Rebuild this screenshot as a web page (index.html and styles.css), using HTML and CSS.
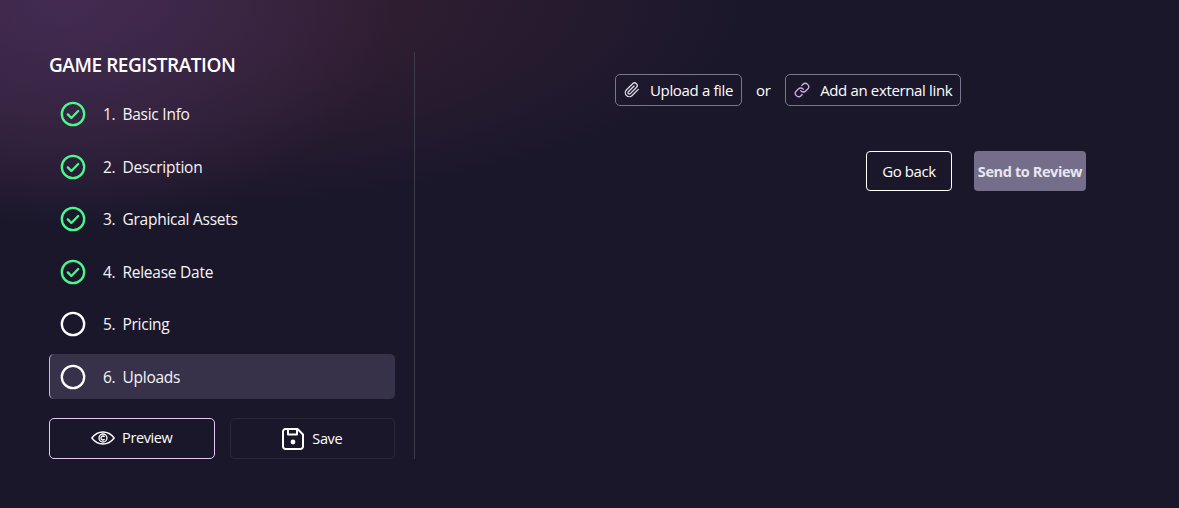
FILE: index.html
```html
<!DOCTYPE html>
<html lang="en">
<head>
<meta charset="utf-8">
<title>Game Registration</title>
<link rel="stylesheet" href="styles.css">
</head>
<body>
<main class="layout">
  <aside class="side">
    <h1 class="title">GAME REGISTRATION</h1>
    <ol class="steps">
      <li class="step"><svg class="st" viewBox="0 0 26 26"><circle cx="13" cy="13" r="11.2" class="ok"/><path d="M7.800 13.400l3.600 3.600 6.800-7" class="ok"/></svg><span class="num">1.</span><span>Basic Info</span></li>
      <li class="step"><svg class="st" viewBox="0 0 26 26"><circle cx="13" cy="13" r="11.2" class="ok"/><path d="M7.800 13.400l3.600 3.600 6.800-7" class="ok"/></svg><span class="num">2.</span><span>Description</span></li>
      <li class="step"><svg class="st" viewBox="0 0 26 26"><circle cx="13" cy="13" r="11.2" class="ok"/><path d="M7.800 13.400l3.600 3.600 6.800-7" class="ok"/></svg><span class="num">3.</span><span>Graphical Assets</span></li>
      <li class="step"><svg class="st" viewBox="0 0 26 26"><circle cx="13" cy="13" r="11.2" class="ok"/><path d="M7.800 13.400l3.600 3.600 6.800-7" class="ok"/></svg><span class="num">4.</span><span>Release Date</span></li>
      <li class="step"><svg class="st" viewBox="0 0 26 26"><circle cx="13" cy="13" r="11.2" class="todo"/></svg><span class="num">5.</span><span>Pricing</span></li>
      <li class="step active"><svg class="st" viewBox="0 0 26 26"><circle cx="13" cy="13" r="11.2" class="todo"/></svg><span class="num">6.</span><span>Uploads</span></li>
    </ol>
    <div class="actions">
      <button class="btn preview"><svg class="eye" viewBox="0 0 24 14"><path d="M.8 7C4 2.800 8 1 12 1s8 1.800 11.200 6C20 11.200 16 13 12 13S4 11.200.8 7z"/><circle cx="12" cy="7" r="4"/><path d="M13.600 5.800A2 2 0 1 0 13.600 8.200"/></svg>Preview</button>
      <button class="btn save"><svg class="disk" viewBox="0 0 22 22"><path d="M3.500 1h12L21 6.500V18.500a2.500 2.500 0 0 1-2.500 2.500h-15A2.500 2.500 0 0 1 1 18.500v-15A2.500 2.500 0 0 1 3.500 1z"/><path d="M6 1v5.500h9V1"/><circle cx="11" cy="14" r="2.400" class="fill"/></svg>Save</button>
    </div>
  </aside>
  <section class="content">
    <div class="upload">
      <button class="pill"><svg class="ic" viewBox="0 0 24 24"><path d="M21.440 11.050l-9.190 9.190a6 6 0 0 1-8.490-8.490l9.190-9.190a4 4 0 0 1 5.660 5.660l-9.200 9.190a2 2 0 0 1-2.830-2.830l8.490-8.480"/></svg>Upload a file</button>
      <span class="or">or</span>
      <button class="pill"><svg class="ic link" viewBox="0 0 24 24"><path d="M10 13a5 5 0 0 0 7.540.54l3-3a5 5 0 0 0-7.070-7.070l-1.720 1.710"/><path d="M14 11a5 5 0 0 0-7.540-.54l-3 3a5 5 0 0 0 7.070 7.070l1.710-1.710"/></svg>Add an external link</button>
    </div>
    <div class="nav">
      <button class="back">Go back</button>
      <button class="send">Send to Review</button>
    </div>
  </section>
</main>
</body>
</html>
```
FILE: styles.css
```css
* { box-sizing: border-box; }
html, body { margin: 0; height: 100%; }
body {
  background-color: #1a172b;
  background-image:
    radial-gradient(ellipse 340px 225px at 60px 0, rgba(68, 44, 86, .9) 0%, rgba(62, 42, 78, .6) 50%, rgba(62, 42, 78, 0) 100%),
    radial-gradient(ellipse 640px 215px at 120px 0, rgba(58, 32, 52, 1) 0%, rgba(50, 30, 50, .7) 55%, rgba(50, 30, 50, 0) 100%);
  color: #fff;
  font-family: "Open Sans", "Noto Sans", sans-serif;
  overflow: hidden;
}
.layout {
  display: flex;
  padding: 52px 0 0 49px;
}
.side {
  width: 366px;
  height: 407px;
  padding-right: 19px;
  border-right: 1px solid #3c3949;
}
.title {
  margin: 0;
  font-size: 19px;
  font-weight: 600;
  line-height: 26px;
  letter-spacing: -.45px;
}
.steps {
  list-style: none;
  margin: 13.500px 0 0;
  padding: 0;
  display: flex;
  flex-direction: column;
  gap: 7.500px;
}
.step {
  height: 45px;
  display: flex;
  align-items: center;
  padding-left: 11px;
  border-radius: 5px;
  font-size: 15.500px;
  font-weight: 500;
  letter-spacing: -.25px;
  color: #f6f4f8;
}
.st { width: 26px; height: 26px; margin-right: 17px; flex: none; }
.num { margin-right: 7px; }
.ok, .todo { fill: none; stroke-width: 2.300; stroke-linecap: round; stroke-linejoin: round; }
.ok { stroke: #4cf88c; }
.todo { stroke: #fff; }
.active { background: #37324a; border-left: 1px solid #d3b3e8; padding-left: 10px; }
.actions {
  display: flex;
  gap: 15px;
  margin-top: 19px;
}
.btn {
  flex: 1;
  height: 41px;
  display: flex;
  align-items: center;
  justify-content: center;
  background: transparent;
  color: #fff;
  border-radius: 5px;
  font: 500 14.500px "Open Sans", "Noto Sans", sans-serif;
  letter-spacing: -.4px;
}
.preview { border: 1px solid #e6c8f4; gap: 7px; padding-bottom: 3px; }
.save { border: 1px solid #2b2839; gap: 8px; padding-top: 1px; }
.eye { width: 24px; height: 14px; fill: none; stroke: #fff; stroke-width: 1.300; }
.disk { width: 22px; height: 22px; fill: none; stroke: #fff; stroke-width: 2; stroke-linejoin: round; }
.disk .fill { fill: #fff; stroke: none; }
.content {
  flex: 1;
  padding-top: 22px;
}
.upload {
  display: flex;
  align-items: center;
  margin-left: 200px;
  gap: 14.500px;
}
.pill {
  height: 32px;
  display: flex;
  align-items: center;
  gap: 10px;
  padding: 0 7.500px 0 8px;
  border: 1px solid #7a7690;
  border-radius: 5px;
  background: transparent;
  color: #fff;
  font: 500 15px "Open Sans", "Noto Sans", sans-serif;
  letter-spacing: -.35px;
}
.ic { width: 16px; height: 16px; fill: none; stroke: #ddd8e6; stroke-width: 2; stroke-linecap: round; stroke-linejoin: round; }
.link { stroke: #cdaee2; }
.or { font-size: 15px; font-weight: 500; letter-spacing: -.3px; }
.nav {
  display: flex;
  gap: 22px;
  margin: 45px 0 0 451px;
}
.back, .send {
  height: 40px;
  border-radius: 4px;
  font: 500 15px "Open Sans", "Noto Sans", sans-serif;
  letter-spacing: -.4px;
  color: #fff;
}
.back { width: 86px; background: transparent; border: 1px solid #fff; }
.send { width: 112px; padding: 0; border: 0; background: #756e8a; font: 700 14.500px "Open Sans", "Noto Sans", sans-serif; letter-spacing: -.4px; color: #e9e7ee; white-space: nowrap; }
```
